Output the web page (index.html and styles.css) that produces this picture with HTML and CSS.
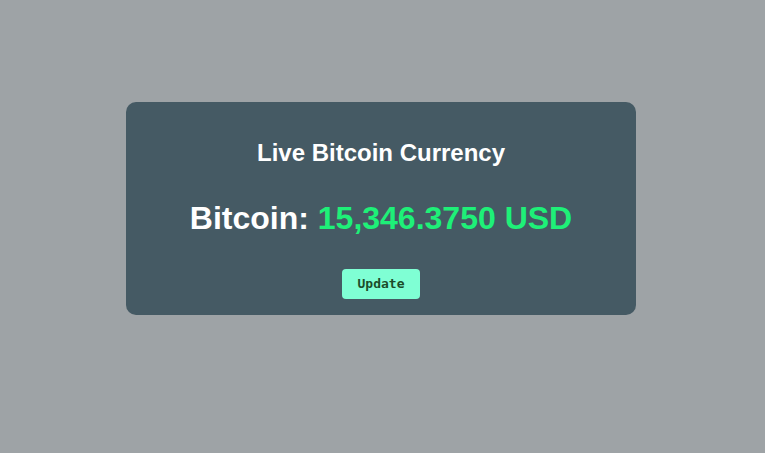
FILE: index.html
```html
<!DOCTYPE html>
<html>
<head>
<meta charset="utf-8">
<link rel="stylesheet" href="styles.css">
</head>
<body>
<div class="page">
  <div class="card">
    <h2 class="title">Live Bitcoin Currency</h2>
    <h1 class="price">Bitcoin: <span class="value">15,346.3750 USD</span></h1>
    <button class="update">Update</button>
  </div>
</div>
</body>
</html>
```
FILE: styles.css
```css
html, body {
  margin: 0;
  padding: 0;
  background: #9ea3a6;
  font-family: "Liberation Sans", Arial, sans-serif;
}
.page {
  padding: 102px 0 0 126px;
}
.card {
  width: 510px;
  box-sizing: border-box;
  padding: 37px 0 16px;
  background: #455a64;
  border-radius: 10px;
  display: flex;
  flex-direction: column;
  align-items: center;
}
.title {
  margin: 0;
  font-size: 24px;
  line-height: 28px;
  font-weight: bold;
  color: #ffffff;
}
.price {
  margin: 32px 0 0;
  font-size: 32px;
  line-height: 38px;
  font-weight: bold;
  color: #ffffff;
}
.value {
  color: #1ef078;
}
.update {
  margin-top: 32px;
  width: 78px;
  height: 30px;
  padding: 0;
  border: none;
  border-radius: 4px;
  background: #7fffd4;
  color: #1b4d2a;
  font-family: "DejaVu Sans Mono", monospace;
  font-weight: bold;
  font-size: 13px;
  line-height: 16px;
}
```
